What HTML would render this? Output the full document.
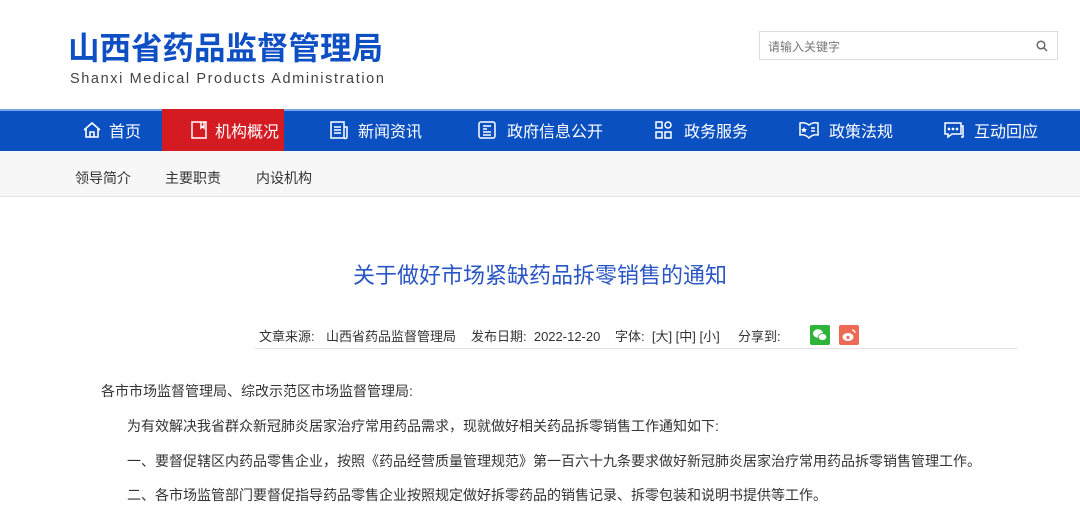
<!DOCTYPE html>
<html><head><meta charset="utf-8"><style>
*{margin:0;padding:0;box-sizing:border-box}
body{width:1080px;height:488px;overflow:hidden;background:#fff;font-family:"Liberation Sans","Noto Sans CJK SC",sans-serif;position:relative}
.a{position:absolute;white-space:nowrap}
.logo{left:68px;top:28px;font-size:31.5px;font-weight:bold;color:#0f4fc4;letter-spacing:0px;line-height:40px}
.en{left:70px;top:71px;font-size:14.5px;color:#444;letter-spacing:1.6px}
.search{left:759px;top:31px;width:299px;height:29px;border:1px solid #ddd}
.search span{position:absolute;left:8px;top:6px;font-size:12px;color:#777}
.nav{left:0;top:109px;width:1080px;height:42px;background:#0b50c0;border-top:2px solid #7aa2e6}
.act{left:162px;top:109px;width:122px;height:42px;background:#d51b22}
.ni{font-size:16px;color:#fff;top:118px}
.sub{left:0;top:151px;width:1080px;height:46px;background:#f7f7f7;border-bottom:1px solid #e6e6e6}
.si{top:168px;font-size:14px;color:#333}
.title{left:0;width:1080px;text-align:center;top:258px;font-size:22px;color:#2a55c4}
.meta{top:326px;font-size:13px;color:#333}
.p{font-size:14px;color:#333}
svg{position:absolute}
</style></head><body>
<div class="a logo">山西省药品监督管理局</div>
<div class="a en">Shanxi Medical Products Administration</div>
<div class="a search"><span>请输入关键字</span>
<svg style="left:276px;top:8px" width="12" height="12" viewBox="0 0 12 12"><circle cx="5" cy="5" r="3.8" fill="none" stroke="#666" stroke-width="1.5"/><path d="M8 8l3 3" stroke="#666" stroke-width="1.5"/></svg></div>
<div class="a nav"></div>
<div class="a act"></div>
<div class="a" style="left:224px;top:150px;width:0;height:0;border-left:4px solid transparent;border-right:4px solid transparent;border-top:5px solid #d51b22"></div>
<svg style="left:82px;top:120px" width="20" height="20" viewBox="0 0 20 20" fill="none" stroke="#fff" stroke-width="1.6"><path d="M2 10L10 3l8 7M4 8v9h12V8M8 17v-5h4v5"/></svg>
<div class="a ni" style="left:109px">首页</div>
<svg style="left:190px;top:120px" width="18" height="20" viewBox="0 0 18 20" fill="none" stroke="#fff" stroke-width="1.5"><rect x="2" y="2" width="14" height="16"/><path d="M11 2v6l1.5-1.5L14 8V2"/></svg>
<div class="a ni" style="left:215px">机构概况</div>
<svg style="left:329px;top:120px" width="20" height="20" viewBox="0 0 20 20" fill="none" stroke="#fff" stroke-width="1.5"><rect x="2" y="2" width="13" height="16"/><path d="M15 7h3v10a1 1 0 01-3 0M5 7h7M5 10h7M5 13h7"/></svg>
<div class="a ni" style="left:358px">新闻资讯</div>
<svg style="left:477px;top:120px" width="20" height="20" viewBox="0 0 20 20" fill="none" stroke="#fff" stroke-width="1.5"><rect x="2" y="2" width="16" height="16" rx="2"/><path d="M6 6h8M6 9h4M6 12h8M6 15h8"/></svg>
<div class="a ni" style="left:507px">政府信息公开</div>
<svg style="left:654px;top:120px" width="20" height="20" viewBox="0 0 20 20" fill="none" stroke="#fff" stroke-width="1.5"><rect x="2" y="2" width="6" height="6"/><circle cx="14" cy="5" r="3"/><rect x="2" y="12" width="6" height="6"/><rect x="11" y="12" width="6" height="6"/></svg>
<div class="a ni" style="left:684px">政务服务</div>
<svg style="left:798px;top:120px" width="22" height="20" viewBox="0 0 22 20" fill="none" stroke="#fff" stroke-width="1.5"><path d="M2 3q5-1 9 2q4-3 9-2v12q-5-1-9 3q-4-4-9-3z"/><path d="M13 8h4M13 11h4"/><path d="M6 7l1 2h2l-1.5 1.5.5 2-2-1-2 1 .5-2L3 9h2z" fill="#fff" stroke="none"/></svg>
<div class="a ni" style="left:829px">政策法规</div>
<svg style="left:943px;top:120px" width="22" height="20" viewBox="0 0 22 20" fill="none" stroke="#fff" stroke-width="1.5"><path d="M2 3h16v11H9l-4 3v-3H2z"/><path d="M18 6h2v11h-2"/><circle cx="6" cy="9" r=".6" fill="#fff"/><circle cx="10" cy="9" r=".6" fill="#fff"/><circle cx="14" cy="9" r=".6" fill="#fff"/></svg>
<div class="a ni" style="left:974px">互动回应</div>
<div class="a sub"></div>
<div class="a si" style="left:75px">领导简介</div>
<div class="a si" style="left:165px">主要职责</div>
<div class="a si" style="left:256px">内设机构</div>
<div class="a title">关于做好市场紧缺药品拆零销售的通知</div>
<div class="a meta" style="left:259px">文章来源:&nbsp;&nbsp;&nbsp;&nbsp;</div>
<div class="a meta" style="left:326px">山西省药品监督管理局</div>
<div class="a meta" style="left:471px">发布日期:&nbsp;&nbsp;2022-12-20</div>
<div class="a meta" style="left:615px">字体:&nbsp;&nbsp;[大] [中] [小]</div>
<div class="a meta" style="left:738px">分享到:</div>
<div class="a" style="left:810px;top:325px;width:20px;height:20px;background:#2fb43a;border-radius:2px"></div>
<svg style="left:812px;top:328px" width="16" height="14" viewBox="0 0 16 14"><ellipse cx="6" cy="5.5" rx="5" ry="4.2" fill="#fff"/><ellipse cx="10.5" cy="9" rx="4.3" ry="3.5" fill="#fff" stroke="#2fb43a" stroke-width=".8"/></svg>
<div class="a" style="left:839px;top:325px;width:20px;height:20px;background:#ef6a55;border-radius:2px"></div>
<svg style="left:841px;top:328px" width="16" height="14" viewBox="0 0 16 14"><ellipse cx="7" cy="9" rx="5.5" ry="4" fill="#fff"/><circle cx="7" cy="9.5" r="1.6" fill="#ef6a55"/><path d="M11 2a3 3 0 013 3" stroke="#fff" stroke-width="1.3" fill="none"/></svg>
<div class="a" style="left:255px;top:348px;width:763px;height:1px;background:#e3e3e3"></div>
<div class="a p" style="left:101px;top:381px">各市市场监督管理局、综改示范区市场监督管理局:</div>
<div class="a p" style="left:127px;top:416px">为有效解决我省群众新冠肺炎居家治疗常用药品需求，现就做好相关药品拆零销售工作通知如下:</div>
<div class="a p" style="left:127px;top:451px">一、要督促辖区内药品零售企业，按照《药品经营质量管理规范》第一百六十九条要求做好新冠肺炎居家治疗常用药品拆零销售管理工作。</div>
<div class="a p" style="left:127px;top:485px">二、各市场监管部门要督促指导药品零售企业按照规定做好拆零药品的销售记录、拆零包装和说明书提供等工作。</div>
</body></html>
